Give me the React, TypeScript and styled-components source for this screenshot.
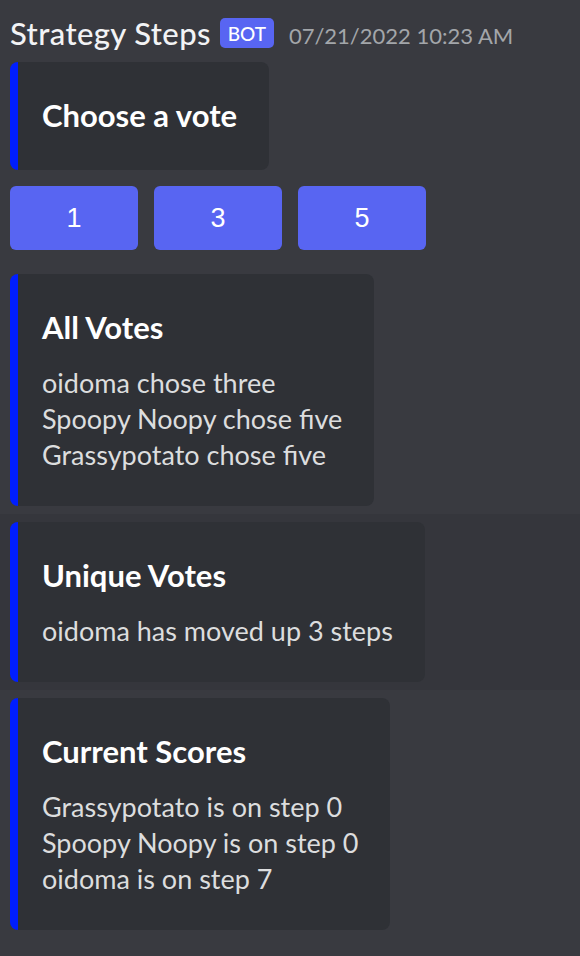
import styled, { createGlobalStyle } from "styled-components"

const GlobalStyle = createGlobalStyle`
  html, body {
    margin: 0;
    padding: 0;
    background: #393a40;
  }
  body {
    font-family: Lato, "Noto Sans", sans-serif;
    -webkit-font-smoothing: antialiased;
  }
`

const Page = styled.div`
  min-height: 956px;
  background: #393a40;
  padding-top: 11px;
  box-sizing: border-box;
`

const Message = styled.div<{ $hover?: boolean; $first?: boolean }>`
  padding: ${(p) => (p.$first ? "0 10px 16px" : "8px 10px")};
  background: ${(p) => (p.$hover ? "#35363c" : "transparent")};
`

const Header = styled.div`
  display: flex;
  align-items: center;
  height: 44px;
`

const Username = styled.span`
  font-size: 31px;
  font-weight: 500;
  letter-spacing: 0.4px;
  color: #f2f3f5;
`

const BotTag = styled.span`
  display: inline-flex;
  align-items: center;
  justify-content: center;
  width: 54px;
  height: 30px;
  margin-left: 9px;
  border-radius: 5px;
  background: #5865f2;
  color: #fff;
  font-size: 19px;
  font-weight: 500;
`

const Timestamp = styled.span`
  margin-left: 15px;
  font-size: 22px;
  color: #a3a6aa;
  padding-top: 4px;
`

const Embed = styled.div<{ $mt?: number }>`
  display: block;
  width: fit-content;
  margin-top: ${(p) => p.$mt ?? 0}px;
  box-sizing: border-box;
  background: #2f3136;
  border-left: 8px solid #001eff;
  border-radius: 8px;
  padding: 31px 32px 33px 24px;
`

const EmbedTitle = styled.div`
  font-size: 31px;
  font-weight: 700;
  line-height: 44px;
  color: #ffffff;
`

const EmbedBody = styled.div`
  margin-top: 16px;
  font-size: 27px;
  line-height: 36px;
  color: #dcddde;
`

const ButtonRow = styled.div`
  display: flex;
  gap: 16px;
  margin-top: 16px;
`

const VoteButton = styled.button`
  width: 128px;
  height: 64px;
  border: none;
  border-radius: 6px;
  background: #5865f2;
  color: #fff;
  font-family: "Liberation Sans", Arial, sans-serif;
  font-size: 27px;
  font-weight: 500;
  cursor: pointer;
`

export default function App() {
  return (
    <Page>
      <GlobalStyle />
      <Message $first>
        <Header>
          <Username>Strategy Steps</Username>
          <BotTag>BOT</BotTag>
          <Timestamp>07/21/2022 10:23 AM</Timestamp>
        </Header>
        <Embed $mt={7}>
          <EmbedTitle>Choose a vote</EmbedTitle>
        </Embed>
        <ButtonRow>
          <VoteButton>1</VoteButton>
          <VoteButton>3</VoteButton>
          <VoteButton>5</VoteButton>
        </ButtonRow>
      </Message>
      <Message>
        <Embed>
          <EmbedTitle>All Votes</EmbedTitle>
          <EmbedBody>
            oidoma chose three
            <br />
            Spoopy Noopy chose five
            <br />
            Grassypotato chose five
          </EmbedBody>
        </Embed>
      </Message>
      <Message $hover>
        <Embed>
          <EmbedTitle>Unique Votes</EmbedTitle>
          <EmbedBody>oidoma has moved up 3 steps</EmbedBody>
        </Embed>
      </Message>
      <Message>
        <Embed>
          <EmbedTitle>Current Scores</EmbedTitle>
          <EmbedBody>
            Grassypotato is on step 0
            <br />
            Spoopy Noopy is on step 0
            <br />
            oidoma is on step 7
          </EmbedBody>
        </Embed>
      </Message>
    </Page>
  )
}
